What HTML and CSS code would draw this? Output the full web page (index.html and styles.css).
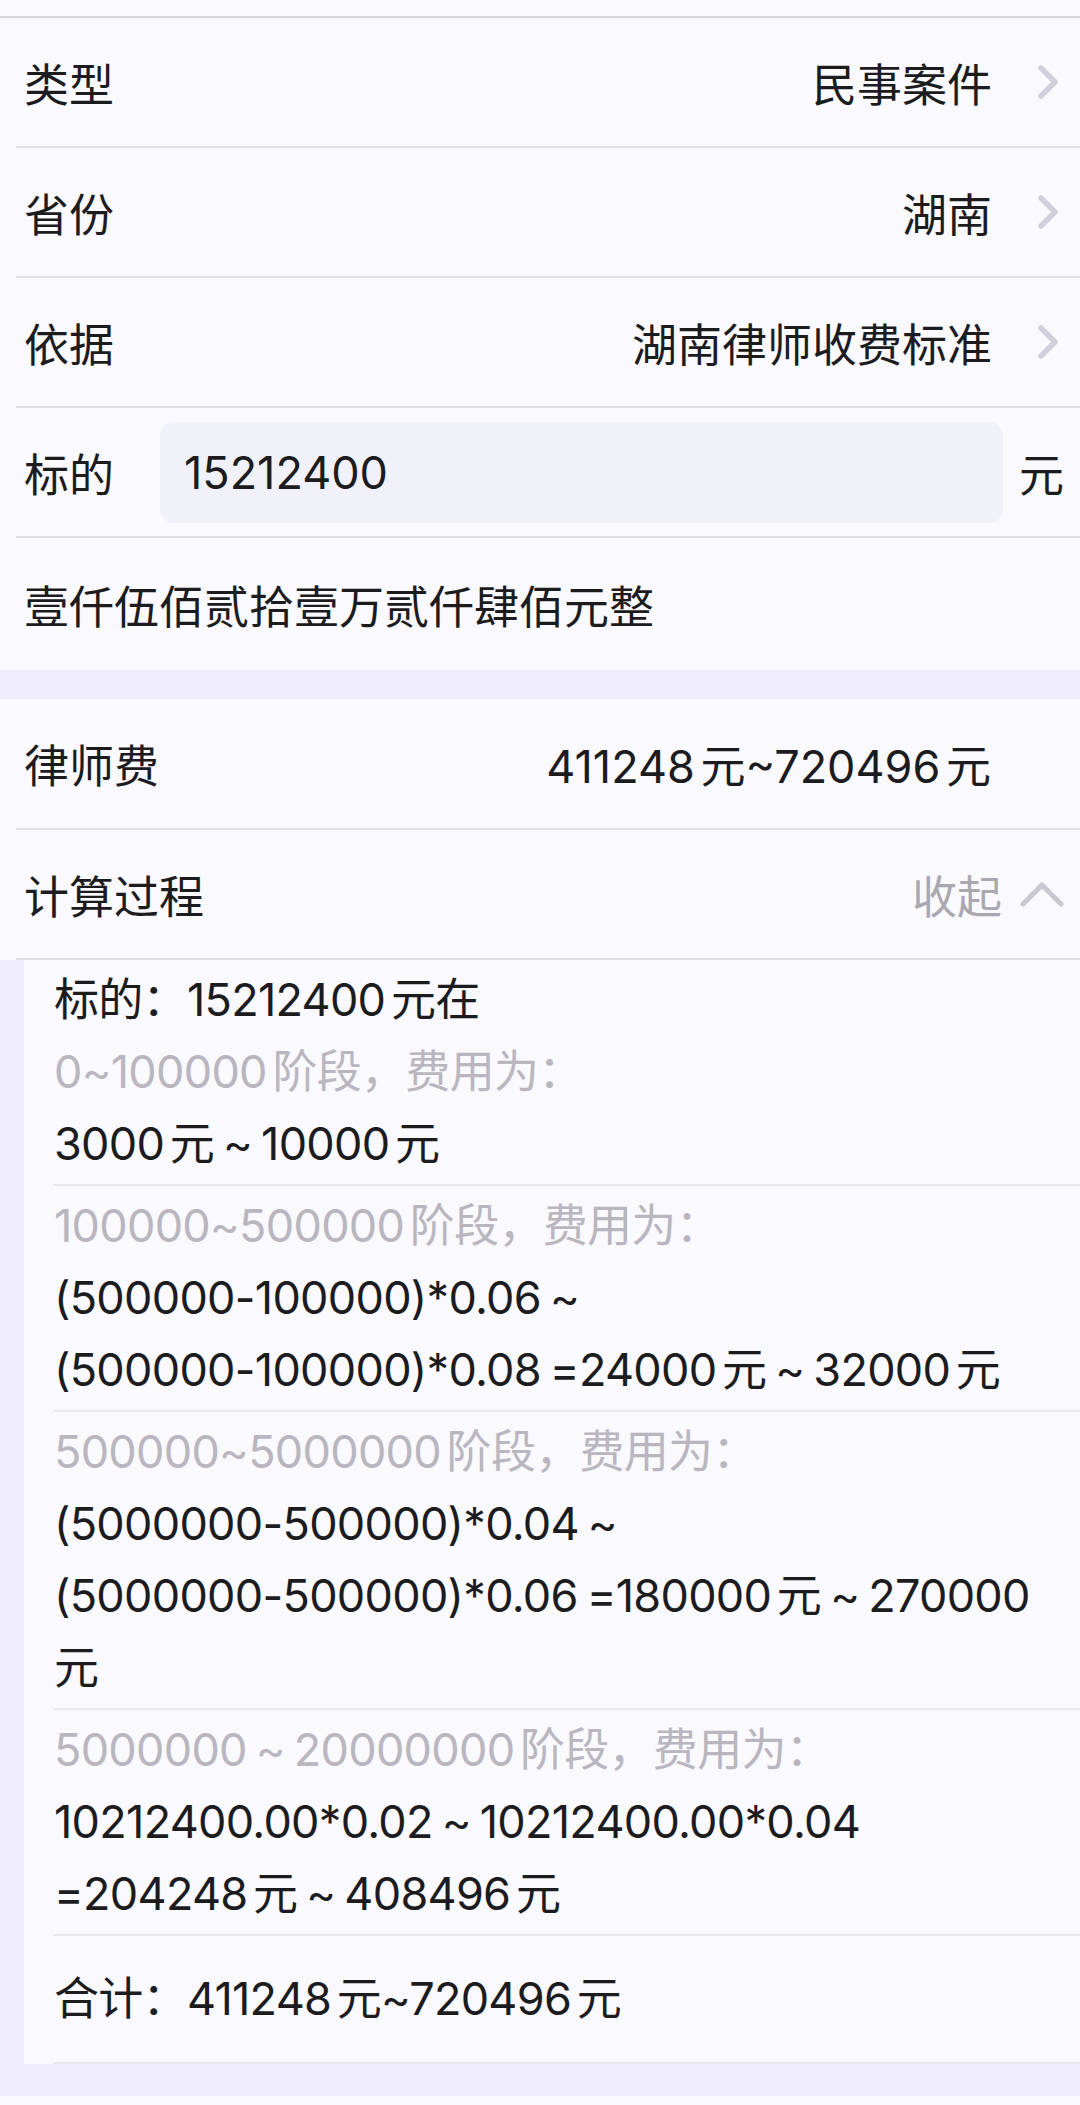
FILE: index.html
```html
<!DOCTYPE html>
<html lang="zh-CN">
<head>
  <meta charset="UTF-8">
  <meta name="viewport" content="width=device-width, initial-scale=1.0">
  <title>律师费计算</title>
  <link rel="stylesheet" href="styles.css">
</head>
<body>
  <main class="page">
    <section class="group first">
      <div class="row link">
        <span class="label">类型</span>
        <span class="value">民事案件</span>
        <svg class="chevron" viewBox="0 0 20 34"><polyline points="3,3 17,17 3,31"/></svg>
      </div>
      <div class="row link">
        <span class="label">省份</span>
        <span class="value">湖南</span>
        <svg class="chevron" viewBox="0 0 20 34"><polyline points="3,3 17,17 3,31"/></svg>
      </div>
      <div class="row link">
        <span class="label">依据</span>
        <span class="value">湖南律师收费标准</span>
        <svg class="chevron" viewBox="0 0 20 34"><polyline points="3,3 17,17 3,31"/></svg>
      </div>
      <div class="row amount">
        <span class="label">标的</span>
        <input class="amount-input" type="text" value="15212400">
        <span class="unit">元</span>
      </div>
      <div class="row plain">
        <span class="label">壹仟伍佰贰拾壹万贰仟肆佰元整</span>
      </div>
    </section>

    <div class="band"></div>

    <section class="group">
      <div class="row fee">
        <span class="label">律师费</span>
        <span class="value">411248元~720496元</span>
      </div>
      <div class="row toggle-row">
        <span class="label">计算过程</span>
        <span class="toggle">收起</span>
        <svg class="chevron-up" viewBox="0 0 44 26"><polyline points="3,23 22,4 41,23"/></svg>
      </div>
      <div class="steps">
        <div class="step">
          <p>标的：15212400元在</p>
          <p class="muted">0~100000阶段，费用为：</p>
          <p>3000元 ~ 10000元</p>
        </div>
        <div class="step">
          <p class="muted">100000~500000阶段，费用为：</p>
          <p>(500000-100000)*0.06 ~</p>
          <p>(500000-100000)*0.08 =24000元 ~ 32000元</p>
        </div>
        <div class="step">
          <p class="muted">500000~5000000阶段，费用为：</p>
          <p>(5000000-500000)*0.04 ~</p>
          <p>(5000000-500000)*0.06 =180000元 ~ 270000</p>
          <p>元</p>
        </div>
        <div class="step">
          <p class="muted">5000000 ~ 20000000阶段，费用为：</p>
          <p>10212400.00*0.02 ~ 10212400.00*0.04</p>
          <p>=204248元 ~ 408496元</p>
        </div>
        <div class="step total">
          <p>合计：411248元~720496元</p>
        </div>
      </div>
    </section>

    <div class="band bottom"></div>
  </main>
</body>
</html>
```

FILE: styles.css
```css
body {
  margin: 0;
  padding: 0;
  background: #f9f9fe;
  color: #1c1c1e;
  font-family: Inter, "Noto Sans CJK SC", sans-serif;
  font-size: 45px;
  text-autospace: normal;
}
.page {
  padding-top: 16px;
}
.group {
  background: #f9f9fe;
}
.group.first {
  border-top: 2px solid #d6d5db;
}
.row {
  display: flex;
  align-items: center;
  height: 128px;
  margin-left: 16px;
  padding-left: 8px;
  border-bottom: 2px solid #dfdee4;
}
.label {
  flex: 1;
  white-space: nowrap;
}
.value {
  white-space: nowrap;
}
.link {
  padding-right: 22px;
}
.chevron {
  width: 20px;
  height: 34px;
  margin-left: 46px;
}
.chevron polyline,
.chevron-up polyline {
  fill: none;
  stroke: #d0cfdb;
  stroke-width: 5.5;
  stroke-linecap: round;
  stroke-linejoin: round;
}
.amount {
  padding-right: 16px;
}
.amount .label {
  flex: 0 0 136px;
}
.amount-input {
  flex: 1;
  min-width: 0;
  height: 101px;
  box-sizing: border-box;
  padding: 0 24px;
  border: none;
  border-radius: 14px;
  background: #f1f2f9;
  color: #1c1c1e;
  font-family: inherit;
  font-size: 45px;
  outline: none;
}
.unit {
  margin-left: 16px;
}
.plain {
  height: 132px;
  border-bottom: none;
}
.band {
  height: 29px;
  background: #efecfb;
}
.band.bottom {
  height: 32px;
}
.fee {
  height: 129px;
  padding-right: 89px;
}
.toggle-row {
  padding-right: 16px;
}
.toggle {
  color: #aba7b1;
}
.chevron-up {
  width: 44px;
  height: 26px;
  margin-left: 18px;
}
.chevron-up polyline {
  stroke: #c9c7d0;
  stroke-width: 5;
}
.steps {
  border-left: 24px solid #efecfb;
}
.step {
  margin-left: 30px;
  padding: 4px 0;
  border-bottom: 2px solid #e8e6f1;
}
.step p {
  margin: 0;
  line-height: 72px;
  white-space: nowrap;
  letter-spacing: -0.7px;
  word-spacing: -3px;
}
.step .muted {
  color: #bab6bf;
}
.step.total {
  padding: 27px 0;
}
```
